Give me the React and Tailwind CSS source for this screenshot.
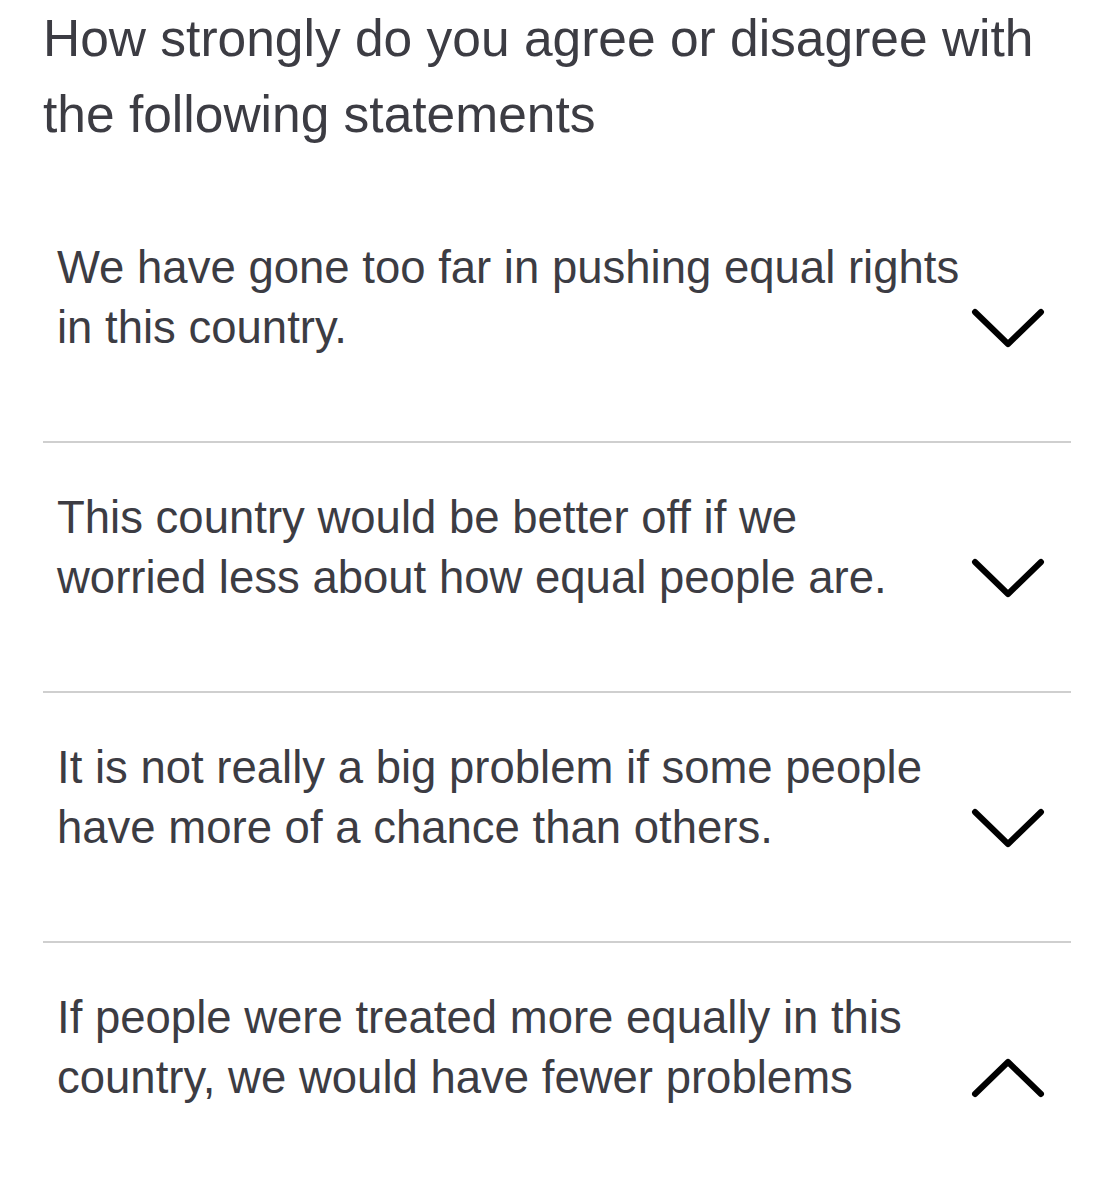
import React from 'react';

const statements = [
  { lines: ['We have gone too far in pushing equal rights', 'in this country.'], open: false },
  { lines: ['This country would be better off if we', 'worried less about how equal people are.'], open: false },
  { lines: ['It is not really a big problem if some people', 'have more of a chance than others.'], open: false },
  { lines: ['If people were treated more equally in this', 'country, we would have fewer problems'], open: true },
];

function Chevron({ up }) {
  return (
    <svg width="74" height="40" viewBox="0 0 74 40" fill="none" className="shrink-0">
      {up ? (
        <polyline points="4,36 37,4 70,36" stroke="#000" strokeWidth="6" strokeLinecap="round" strokeLinejoin="round" />
      ) : (
        <polyline points="4,4 37,36 70,4" stroke="#000" strokeWidth="6" strokeLinecap="round" strokeLinejoin="round" />
      )}
    </svg>
  );
}

export default function App() {
  return (
    <div className="min-h-screen bg-white text-[#3c3c43] px-[43px] font-['Liberation_Sans',Arial,sans-serif]">
      <h1 className="text-[51.5px] leading-[76px] font-normal">
        How strongly do you agree or disagree with the following statements
      </h1>

      <div className="mt-[41px]">
        {statements.map((s, i) => (
          <div
            key={i}
            className={`flex items-start justify-between h-[250px] pl-[14px] pr-[26px] ${i < statements.length - 1 ? 'border-b-2 border-[#cfcfcf]' : ''}`}
          >
            <p className="text-[45.5px] leading-[60px] mt-[45px] whitespace-nowrap">
              {s.lines[0]}
              <br />
              {s.lines[1]}
            </p>
            <div className="mt-[115px]">
              <Chevron up={s.open} />
            </div>
          </div>
        ))}
      </div>
    </div>
  );
}
